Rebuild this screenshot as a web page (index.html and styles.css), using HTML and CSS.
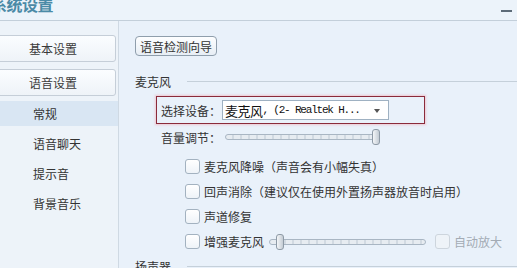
FILE: index.html
```html
<!DOCTYPE html>
<html lang="zh">
<head>
<meta charset="utf-8">
<link rel="stylesheet" href="styles.css">
</head>
<body>
<div class="win">
  <div class="titlebar">
    <span class="title">系统设置</span>
    <span class="min"></span>
  </div>
  <div class="main">
    <div class="sidebar">
      <div class="navbtn">基本设置</div>
      <div class="navbtn">语音设置</div>
      <ul class="sublist">
        <li class="active">常规</li>
        <li>语音聊天</li>
        <li>提示音</li>
        <li>背景音乐</li>
      </ul>
    </div>
    <div class="content">
      <div class="wizard">语音检测向导</div>
      <div class="section"><span>麦克风</span><i></i></div>
      <div class="devbox">
        <span class="lbl">选择设备：</span>
        <div class="select"><span class="cn">麦克风</span><span class="lat">, (2- Realtek H...</span><b class="arrow"></b></div>
      </div>
      <div class="volrow">
        <span class="lbl">音量调节：</span>
        <div class="slider long"><div class="thumb end"></div></div>
      </div>
      <div class="checks">
        <label class="chk"><span class="box"></span>麦克风降噪（声音会有小幅失真）</label>
        <label class="chk"><span class="box"></span>回声消除（建议仅在使用外置扬声器放音时启用）</label>
        <label class="chk"><span class="box"></span>声道修复</label>
        <label class="chk"><span class="box"></span>增强麦克风
          <div class="slider short"><div class="thumb start"></div></div>
          <span class="box dis"></span><span class="distext">自动放大</span>
        </label>
      </div>
      <div class="section bottom"><span>扬声器</span><i></i></div>
    </div>
  </div>
</div>
</body>
</html>
```
FILE: styles.css
```css
* { box-sizing: border-box; }
html, body { margin: 0; padding: 0; }
body {
  width: 517px; height: 268px; overflow: hidden;
  font-family: "Noto Sans CJK SC", "Noto Sans", sans-serif;
  font-size: 12px; color: #333;
  background: #e9f1fa;
}
.win { width: 517px; height: 268px; display: flex; flex-direction: column; }
.titlebar {
  height: 21px; flex: none;
  background: #ecf3fa;
  border-bottom: 1px solid #c3cfda;
  display: flex; align-items: flex-start; justify-content: space-between;
  overflow: hidden;
}
.title {
  font-size: 16px; line-height: 16px; font-weight: bold;
  color: #4b8aa6; margin-left: -9px; margin-top: -4px;
  letter-spacing: -0.5px; white-space: nowrap;
}
.min {
  width: 11px; height: 2px; background: #5d6b78;
  margin-top: 10px; margin-right: 5px;
}
.main { flex: 1; display: flex; min-height: 0; }
.sidebar {
  width: 119px; flex: none;
  background: #edf3f9;
  border-right: 1px solid #cfd9e3;
  padding-top: 14px;
}
.navbtn {
  width: 126px; height: 27px; margin-left: -10px; margin-bottom: 7px;
  border: 1px solid #c5ced8; border-radius: 3px;
  background: linear-gradient(#fbfdff, #eef3f8);
  display: flex; align-items: center; justify-content: center;
  color: #3a3a3a; font-size: 12px;
}
.navbtn + .navbtn { margin-bottom: 5px; }
.sublist { list-style: none; margin: 0; padding: 0; }
.sublist li {
  height: 25px; margin-bottom: 5px; padding-left: 33px;
  display: flex; align-items: center; font-size: 12px; color: #333;
}
.sublist li.active { background: #d9e6f3; }
.content { flex: 1; padding: 15px 0 0 16px; }
.wizard {
  display: inline-flex; align-items: center; justify-content: center;
  width: 82px; height: 20px;
  border: 1px solid #8f9eac; border-radius: 4px;
  background: linear-gradient(#fdfeff, #e7eef5);
  font-size: 12px; color: #333;
}
.section {
  display: flex; align-items: center; margin-top: 15px; height: 20px;
  font-size: 12px;
}
.section i { flex: 1; height: 1px; background: #c5d0da; margin-left: 16px; }
.devbox {
  margin-left: 21px; margin-top: 5px;
  width: 269px; height: 28px;
  border: 1px solid #8a2b3b;
  box-shadow: 0 0 2px 1px rgba(240, 170, 180, 0.6);
  display: flex; align-items: center; padding-left: 4px;
}
.lbl { width: 61px; font-size: 12px; color: #333; flex: none; white-space: nowrap; }
.select {
  width: 167px; height: 20px; background: #fff;
  border: 1px solid #9fb1c2;
  display: flex; align-items: center; padding-left: 2px;
  position: relative; white-space: nowrap;
}
.select .cn { font-size: 13px; color: #111; letter-spacing: -0.5px; }
.select .lat {
  font-family: "Liberation Mono", monospace; font-size: 11px;
  letter-spacing: -1.2px; color: #111; white-space: pre;
}
.arrow {
  position: absolute; right: 8px; top: 8px;
  border-left: 3.5px solid transparent; border-right: 3.5px solid transparent;
  border-top: 4px solid #555;
}
.volrow { display: flex; align-items: center; margin-left: 26px; height: 26px; }
.volrow .lbl { width: 64px; }
.slider {
  position: relative; height: 6px;
  border: 1px solid #a9b6c3; border-radius: 3px;
  background: repeating-linear-gradient(90deg, #e7ecf1 0 6px, #d2dae2 6px 8px);
}
.slider.long { width: 154px; }
.slider.short { width: 157px; margin-left: 5px; }
.thumb {
  position: absolute; top: -6px; width: 8px; height: 16px;
  border: 1px solid #8e9aa6; border-radius: 3px;
  background: linear-gradient(90deg, #f4f6f8, #c4ccd4);
}
.thumb.end { right: -2px; }
.thumb.start { left: 6px; }
.checks { margin-left: 50px; margin-top: 4px; display: flex; flex-direction: column; }
.chk { display: flex; align-items: center; height: 25px; font-size: 12px; color: #333; white-space: nowrap; }
.box {
  width: 15px; height: 15px; flex: none; margin-right: 4px;
  border: 1px solid #a3b2c0; border-radius: 3px;
  background: linear-gradient(#ffffff, #eef3f8);
}
.box.dis { border-color: #cdd5dd; margin-left: 9px; background: #eef3f8; }
.distext { color: #a3abb4; }
.section.bottom { margin-top: 2px; }
```
